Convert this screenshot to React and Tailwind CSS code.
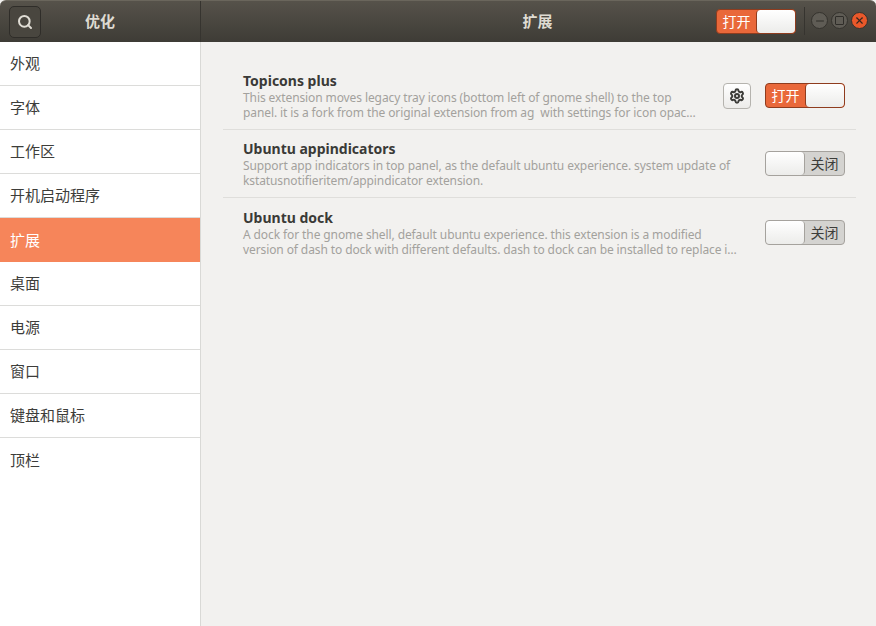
import { Search, Minus, X, Settings } from 'lucide-react';

const font = "font-['Noto_Sans','Noto_Sans_CJK_SC',sans-serif]";

const menu = ['外观', '字体', '工作区', '开机启动程序', '扩展', '桌面', '电源', '窗口', '键盘和鼠标', '顶栏'];

const extensions = [
  {
    name: 'Topicons plus',
    lines: [
      'This extension moves legacy tray icons (bottom left of gnome shell) to the top',
      'panel. it is a fork from the original extension from ag  with settings for icon opac…',
    ],
    on: true,
    settings: true,
  },
  {
    name: 'Ubuntu appindicators',
    lines: [
      'Support app indicators in top panel, as the default ubuntu experience. system update of',
      'kstatusnotifieritem/appindicator extension.',
    ],
    on: false,
  },
  {
    name: 'Ubuntu dock',
    lines: [
      'A dock for the gnome shell, default ubuntu experience. this extension is a modified',
      'version of dash to dock with different defaults. dash to dock can be installed to replace i…',
    ],
    on: false,
  },
];

function Toggle({ on }) {
  if (on) {
    return (
      <div className="flex h-[25px] w-[80px] shrink-0 items-stretch rounded-[4px] border border-[#8f3c1e] bg-[#e9683a] text-[14px] text-white">
        <span className="flex w-[39px] items-center justify-center">打开</span>
        <span className="flex-1 rounded-[4px] border-l border-[#8f3c1e] bg-gradient-to-b from-white to-[#ececea]"></span>
      </div>
    );
  }
  return (
    <div className="flex h-[25px] w-[80px] shrink-0 items-stretch rounded-[4px] border border-[#a5a29d] bg-[#d4d3d0] text-[14px] text-[#3d3d3a]">
      <span className="w-[39px] rounded-[4px] border-r border-[#a5a29d] bg-gradient-to-b from-white to-[#ececea]"></span>
      <span className="flex flex-1 items-center justify-center">关闭</span>
    </div>
  );
}

function WindowButton({ className, children }) {
  return (
    <div className={`flex h-[17px] w-[17px] items-center justify-center rounded-full border border-[#34322d] ${className}`}>
      {children}
    </div>
  );
}

export default function App() {
  return (
    <div className={`flex h-[626px] w-[876px] flex-col overflow-hidden bg-[#f2f1ef] ${font}`}>
      <header className="flex h-[42px] shrink-0 rounded-t-[6px] border-t border-[#6a665c] bg-gradient-to-b from-[#56524a] to-[#3e3c36] text-[#dfdbd2]">
        <div className="flex w-[201px] shrink-0 items-center border-r border-[#36342f] pl-[9px]">
          <button className="flex h-[32px] w-[32px] items-center justify-center rounded-[5px] border border-[#2f2d29] bg-[#49463f]">
            <Search size={16} strokeWidth={3} className="text-[#e0ddd5]" />
          </button>
          <span className="ml-[44px] text-[15px] font-bold">优化</span>
        </div>
        <div className="relative flex flex-1 items-center justify-center">
          <span className="mr-[2px] text-[15px] font-bold">扩展</span>
          <div className="absolute left-[515px] top-[8px]">
            <Toggle on />
          </div>
          <div className="absolute left-[603px] top-[6px] h-[28px] w-px bg-[#36342f]"></div>
          <div className="absolute left-[610px] top-[11px] flex gap-[3px]">
            <WindowButton className="bg-[#5f5c55]">
              <Minus size={12} strokeWidth={2} className="text-[#2f2d29]" />
            </WindowButton>
            <WindowButton className="bg-[#5f5c55]">
              <span className="h-[9px] w-[9px] rounded-[1px] border border-[#2f2d29]"></span>
            </WindowButton>
            <WindowButton className="bg-[#e9582a]">
              <X size={11} strokeWidth={2.5} className="text-[#38271f]" />
            </WindowButton>
          </div>
        </div>
      </header>

      <div className="flex flex-1">
        <nav className="w-[201px] shrink-0 border-r border-[#d9d9d6] bg-white">
          {menu.map((item) => (
            <div
              key={item}
              className={`flex h-[44px] items-center pl-[10px] text-[15px] ${
                item === '扩展'
                  ? 'bg-[#f6855a] text-white'
                  : 'border-b border-[#dcdcda] text-[#3d3d3a]'
              } ${item === '顶栏' ? 'border-b-0' : ''}`}
            >
              {item}
            </div>
          ))}
        </nav>

        <main className="flex-1 pl-[22px] pr-[20px] pt-[20px]">
          {extensions.map((ext, i) => (
            <div
              key={ext.name}
              className={`flex h-[68px] items-center pl-[20px] pr-[11px] ${i < 2 ? 'border-b border-[#dfdedb]' : ''}`}
            >
              <div className="min-w-0 flex-1">
                <div className="text-[14px] font-bold leading-[19px] text-[#3a3a37]">{ext.name}</div>
                {ext.lines.map((line) => (
                  <div key={line} className="whitespace-pre text-[12px] leading-[15px] tracking-[-0.1px] text-[#a3a19d]">
                    {line}
                  </div>
                ))}
              </div>
              {ext.settings && (
                <button className="mr-[14px] flex h-[26px] w-[28px] shrink-0 items-center justify-center rounded-[4px] border border-[#b5b3ae] bg-gradient-to-b from-white to-[#ecebe9]">
                  <Settings size={16} strokeWidth={3} className="text-[#3d3d3a]" />
                </button>
              )}
              <Toggle on={ext.on} />
            </div>
          ))}
        </main>
      </div>
    </div>
  );
}
